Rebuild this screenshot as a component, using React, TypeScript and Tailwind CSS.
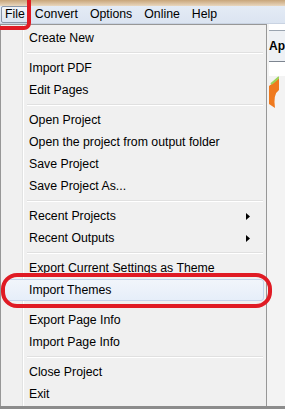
import { ReactNode } from 'react';

type Entry = { label: string; sub?: boolean; hot?: boolean } | 'sep';

const entries: Entry[] = [
	{ label: 'Create New' },
	'sep',
	{ label: 'Import PDF' },
	{ label: 'Edit Pages' },
	'sep',
	{ label: 'Open Project' },
	{ label: 'Open the project from output folder' },
	{ label: 'Save Project' },
	{ label: 'Save Project As...' },
	'sep',
	{ label: 'Recent Projects', sub: true },
	{ label: 'Recent Outputs', sub: true },
	'sep',
	{ label: 'Export Current Settings as Theme' },
	{ label: 'Import Themes', hot: true },
	'sep',
	{ label: 'Export Page Info' },
	{ label: 'Import Page Info' },
	'sep',
	{ label: 'Close Project' },
	{ label: 'Exit' },
];

function MenuItem({ label, sub, hot }: { label: string; sub?: boolean; hot?: boolean }) {
	return (
		<div
			className={
				'relative h-[22px] flex items-center pl-[25px] pr-3 rounded-[3px] border ' +
				(hot ? 'bg-[linear-gradient(#f1f5fb,#e6eef9)] border-[#c3d3ea]' : 'border-transparent')
			}
		>
			<span className="grow">{label}</span>
			{sub && (
				<svg width="4" height="7" viewBox="0 0 4 7" className="mr-[1px]">
					<path d="M0 0 L4 3.5 L0 7 Z" fill="#000" />
				</svg>
			)}
		</div>
	);
}

function TopItem({ children }: { children: ReactNode }) {
	return <div className="px-[6px] h-[18px] flex items-center">{children}</div>;
}

export default function App() {
	return (
		<div
			className="relative w-[285px] h-[409px] overflow-hidden bg-[#f0f0f0] text-[12.3px] text-black"
			style={{ fontFamily: '"Liberation Sans", Arial, sans-serif' }}
		>
			{/* title bar sliver */}
			<div className="h-[6px] bg-[linear-gradient(#c8a57a,#e9d7bf)]" />

			{/* menu bar */}
			<div className="h-[18px] flex items-center bg-[linear-gradient(#e4ebf5,#dbe4f1)] border-b border-[#c9d3e2]">
				<div className="ml-[1px] h-[17px] px-[3px] flex items-center border border-[#8a96a8] rounded-[2px] bg-[linear-gradient(#f2f5fa,#dde5f0)]">
					File
				</div>
				<div className="flex">
					<TopItem>Convert</TopItem>
					<TopItem>Options</TopItem>
					<TopItem>Online</TopItem>
					<TopItem>Help</TopItem>
				</div>
			</div>

			<div className="flex h-[385px]">
				{/* dropdown */}
				<div className="w-[275px] h-[383px] border border-[#979797] p-[2px] bg-[linear-gradient(to_right,#f0f0f0_21px,#e2e3e3_21px,#e2e3e3_22px,#ffffff_22px,#ffffff_23px,#f0f0f0_23px)] shadow-[2px_2px_2px_rgba(0,0,0,0.35)]">
					{entries.map((e, i) =>
						e === 'sep' ? (
							<div key={i} className="h-[8px] flex flex-col justify-center pl-[24px] pr-[1px]">
								<div className="h-[1px] bg-[#e0e0e0]" />
								<div className="h-[1px] bg-white" />
							</div>
						) : (
							<MenuItem key={i} {...e} />
						),
					)}
				</div>

				{/* app content peeking out on the right */}
				<div className="grow flex flex-col pl-[2px] bg-[#f3f3f3]">
					<div className="h-[6px] bg-white" />
					<div className="h-[1px] bg-[#9aa4b0]" />
					<div className="h-[30px] flex items-center font-bold text-[12px] bg-[#eef1f5] whitespace-nowrap">Ap</div>
					<div className="h-[1px] bg-[#7d8590]" />
					<div className="h-[14px] bg-white" />
					<div className="h-[40px] relative">
						<svg width="10" height="40" viewBox="0 0 10 40" className="absolute left-0 top-0">
							<path d="M0 10 Q8 4 10 2 L10 14 Q4 18 6 32 L0 28 Z" fill="#ef7a1f" />
							<path d="M2 8 Q8 3 10 1" stroke="#9bd35a" strokeWidth="2" fill="none" />
						</svg>
					</div>
				</div>
			</div>

			{/* bottom edge */}
			<div className="absolute left-0 right-0 top-[406px] h-[3px] bg-[#8c8c8c]" />

			{/* red annotation marks */}
			<div className="absolute -left-[6px] -top-[8px] w-[37px] h-[38px] border-[4px] border-[#e01b24] rounded-[7px]" />
			<div className="absolute left-[1px] top-[273px] w-[271px] h-[35px] border-[4px] border-[#e01b24] rounded-[16px]" />
		</div>
	);
}
